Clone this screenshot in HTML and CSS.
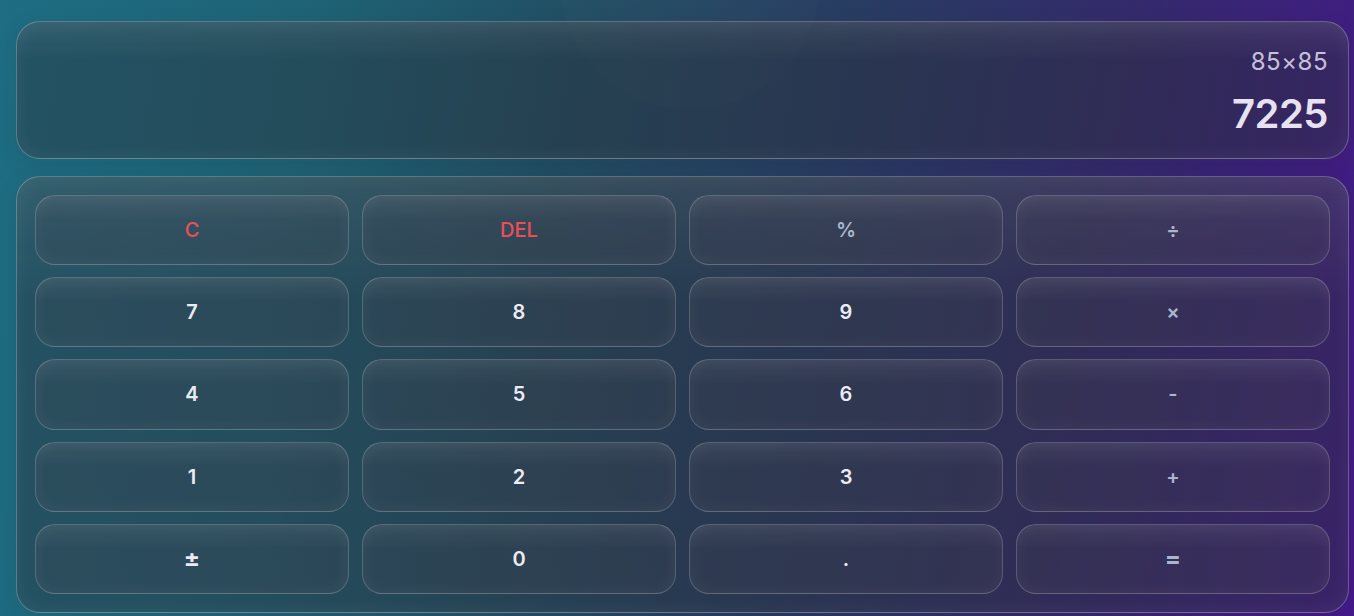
FILE: index.html
```html
<!DOCTYPE html>
<html lang="en">
<head>
<meta charset="utf-8">
<title>Calculator</title>
<link rel="stylesheet" href="styles.css">
</head>
<body>
<div class="bg-orb"></div>
<main class="calc">
  <section class="display">
    <div class="expr">85×85</div>
    <div class="result">7225</div>
  </section>
  <section class="keypad">
    <button class="key key-danger">C</button>
    <button class="key key-danger">DEL</button>
    <button class="key key-op">%</button>
    <button class="key key-op">÷</button>
    <button class="key">7</button>
    <button class="key">8</button>
    <button class="key">9</button>
    <button class="key key-op">×</button>
    <button class="key">4</button>
    <button class="key">5</button>
    <button class="key">6</button>
    <button class="key key-op">-</button>
    <button class="key">1</button>
    <button class="key">2</button>
    <button class="key">3</button>
    <button class="key key-op">+</button>
    <button class="key key-big">±</button>
    <button class="key">0</button>
    <button class="key">.</button>
    <button class="key key-op key-big">=</button>
  </section>
</main>
</body>
</html>
```

FILE: styles.css
```css
html, body {
  margin: 0;
  height: 100%;
}

body {
  height: 616px;
  overflow: hidden;
  padding: 21px 5px 0 16px;
  box-sizing: border-box;
  font-family: "Inter", "Noto Sans", sans-serif;
  background:
    radial-gradient(circle at 12% 110%, rgba(30, 110, 135, 0.35), rgba(30, 110, 135, 0) 40%),
    linear-gradient(100deg, #1e6d83 0%, #1f6275 22%, #224e63 40%, #293b62 60%, #342a6c 78%, #44198a 100%);
  position: relative;
}

.bg-orb {
  position: absolute;
  left: 560px;
  top: -150px;
  width: 260px;
  height: 260px;
  border-radius: 50%;
  background: radial-gradient(circle, rgba(255, 255, 255, 0.015), rgba(255, 255, 255, 0.01) 70%, rgba(255, 255, 255, 0) 72%);
  pointer-events: none;
}

.calc {
  position: relative;
  width: 1333px;
  display: flex;
  flex-direction: column;
  gap: 17px;
}

.display,
.keypad {
  box-sizing: border-box;
  border: 1px solid rgba(255, 255, 255, 0.26);
  border-radius: 24px;
  background:
    linear-gradient(180deg, rgba(255, 255, 255, 0.07), rgba(255, 255, 255, 0) 28%),
    rgba(44, 48, 58, 0.42);
  box-shadow:
    inset 0 0 22px rgba(255, 255, 255, 0.06),
    0 6px 24px rgba(0, 0, 0, 0.08);
}

.display {
  height: 138px;
  padding: 4px 20px 0 20px;
  display: flex;
  flex-direction: column;
  justify-content: center;
  align-items: flex-end;
  gap: 14px;
}

.expr {
  font-size: 24px;
  line-height: 30px;
  font-weight: 400;
  color: rgba(232, 228, 245, 0.82);
  letter-spacing: 0.5px;
}

.result {
  font-size: 40px;
  line-height: 46px;
  font-weight: 600;
  color: #e6e2f2;
  letter-spacing: -0.5px;
}

.keypad {
  height: 437px;
  padding: 18px;
  display: grid;
  grid-template-columns: repeat(4, 1fr);
  grid-template-rows: repeat(5, 1fr);
  column-gap: 13px;
  row-gap: 12px;
}

.key {
  font-family: inherit;
  border: 1px solid rgba(255, 255, 255, 0.2);
  border-radius: 20px;
  background:
    linear-gradient(180deg, rgba(255, 255, 255, 0.06), rgba(255, 255, 255, 0) 35%),
    rgba(64, 66, 82, 0.26);
  box-shadow: inset 0 0 18px rgba(255, 255, 255, 0.05);
  color: #ecebf3;
  font-size: 20px;
  font-weight: 600;
  display: flex;
  align-items: center;
  justify-content: center;
  padding: 0;
  cursor: pointer;
}

.key-danger {
  color: #ec4e57;
  font-weight: 500;
}

.key-op {
  color: #a9b6cc;
}

.key-big {
  font-size: 24px;
  font-weight: 700;
}
```
